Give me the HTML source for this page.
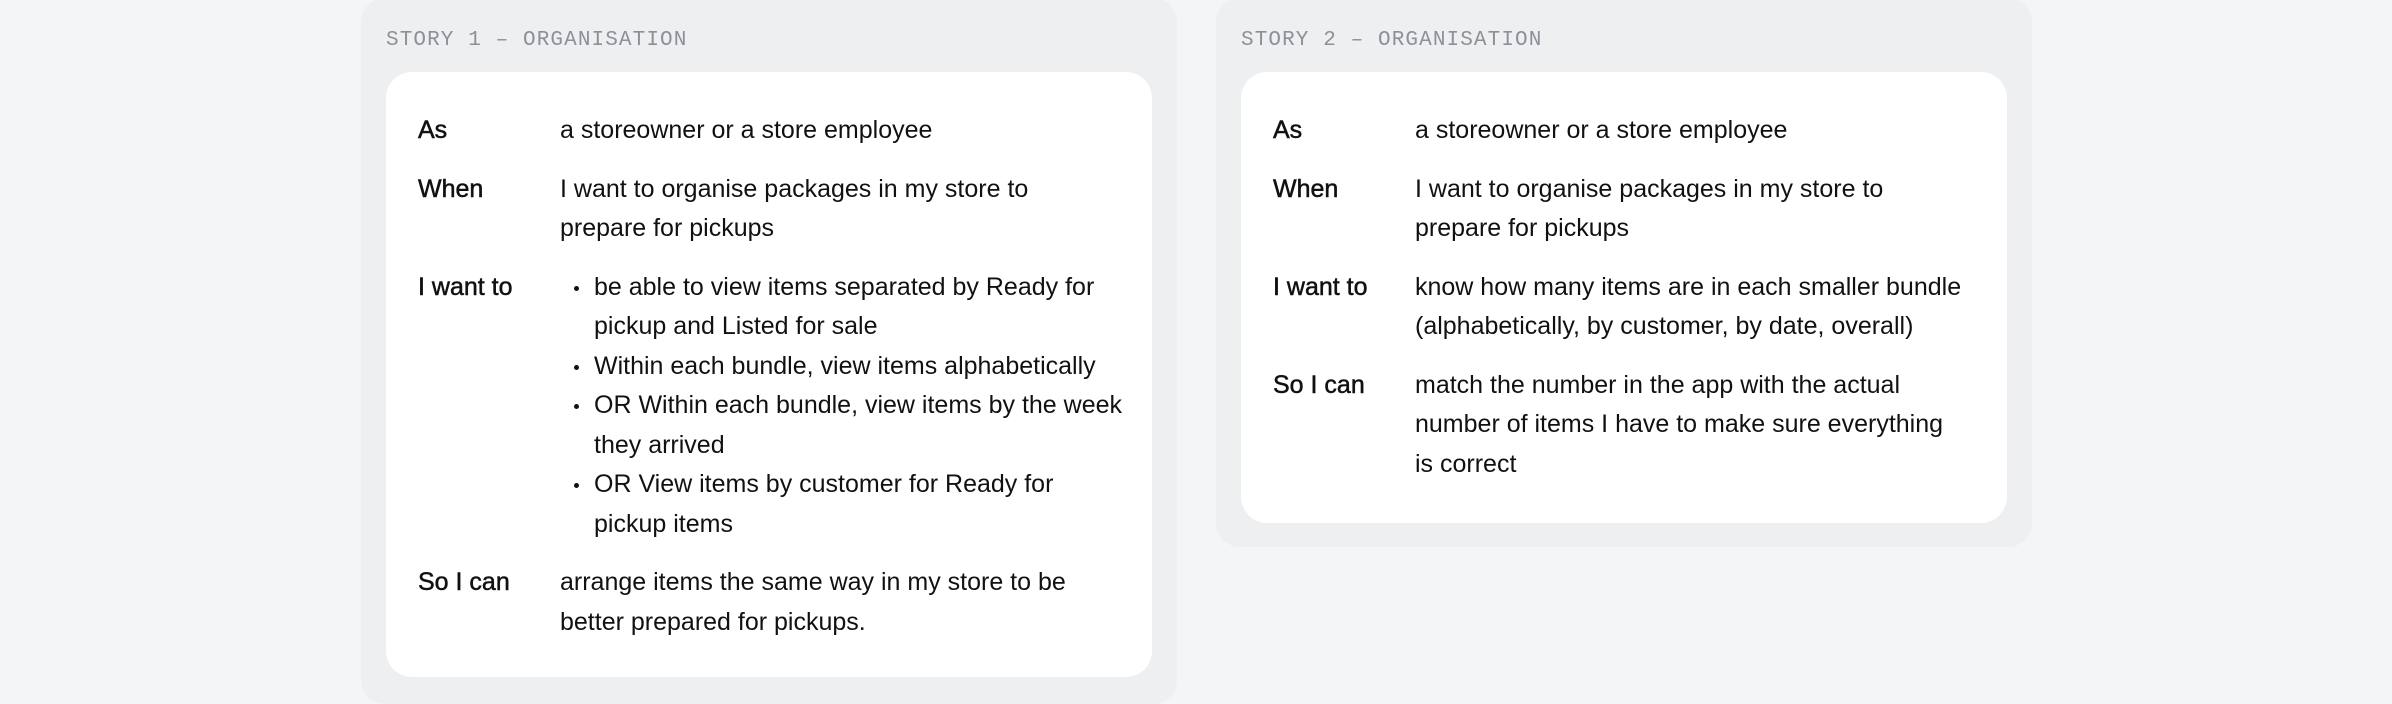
<!DOCTYPE html>
<html><head><meta charset="utf-8"><style>
*{margin:0;padding:0;box-sizing:border-box}
body{width:2392px;height:704px;background:#f4f5f7;position:relative;overflow:hidden;font-family:"Liberation Sans",sans-serif;color:#111}
.panel{position:absolute;background:#eeeff1;border-radius:24px}
.lbl{position:absolute;left:25px;top:31px;font-family:"Liberation Mono",monospace;font-size:21px;letter-spacing:1.1px;color:#8c9098}
.card{position:absolute;left:25px;top:74px;background:#fff;border-radius:26px;padding:39px 0 0 32px}
.row{display:flex;margin-bottom:19px;font-size:25px;line-height:39.5px;white-space:nowrap}
.k{width:142px;-webkit-text-stroke:0.5px #111}
.b{position:relative;padding-left:34px}
.b::before{content:"";position:absolute;left:14px;top:18px;width:5px;height:5px;border-radius:50%;background:#111}
</style></head><body>
<div class="panel" style="left:361px;top:-2px;width:816px;height:706px">
 <div class="lbl">STORY 1 – ORGANISATION</div>
 <div class="card" style="width:766px;height:605px">
  <div class="row"><div class="k">As</div><div class="v">a storeowner or a store employee</div></div>
  <div class="row"><div class="k">When</div><div class="v">I want to organise packages in my store to<br>prepare for pickups</div></div>
  <div class="row"><div class="k">I want to</div><div class="v">
   <div class="b">be able to view items separated by Ready for<br>pickup and Listed for sale</div>
   <div class="b">Within each bundle, view items alphabetically</div>
   <div class="b">OR Within each bundle, view items by the week<br>they arrived</div>
   <div class="b">OR View items by customer for Ready for<br>pickup items</div>
  </div></div>
  <div class="row"><div class="k">So I can</div><div class="v">arrange items the same way in my store to be<br>better prepared for pickups.</div></div>
 </div>
</div>
<div class="panel" style="left:1216px;top:-2px;width:816px;height:549px">
 <div class="lbl">STORY 2 – ORGANISATION</div>
 <div class="card" style="width:766px;height:451px">
  <div class="row"><div class="k">As</div><div class="v">a storeowner or a store employee</div></div>
  <div class="row"><div class="k">When</div><div class="v">I want to organise packages in my store to<br>prepare for pickups</div></div>
  <div class="row"><div class="k">I want to</div><div class="v">know how many items are in each smaller bundle<br>(alphabetically, by customer, by date, overall)</div></div>
  <div class="row"><div class="k">So I can</div><div class="v">match the number in the app with the actual<br>number of items I have to make sure everything<br>is correct</div></div>
 </div>
</div>
</body></html>
